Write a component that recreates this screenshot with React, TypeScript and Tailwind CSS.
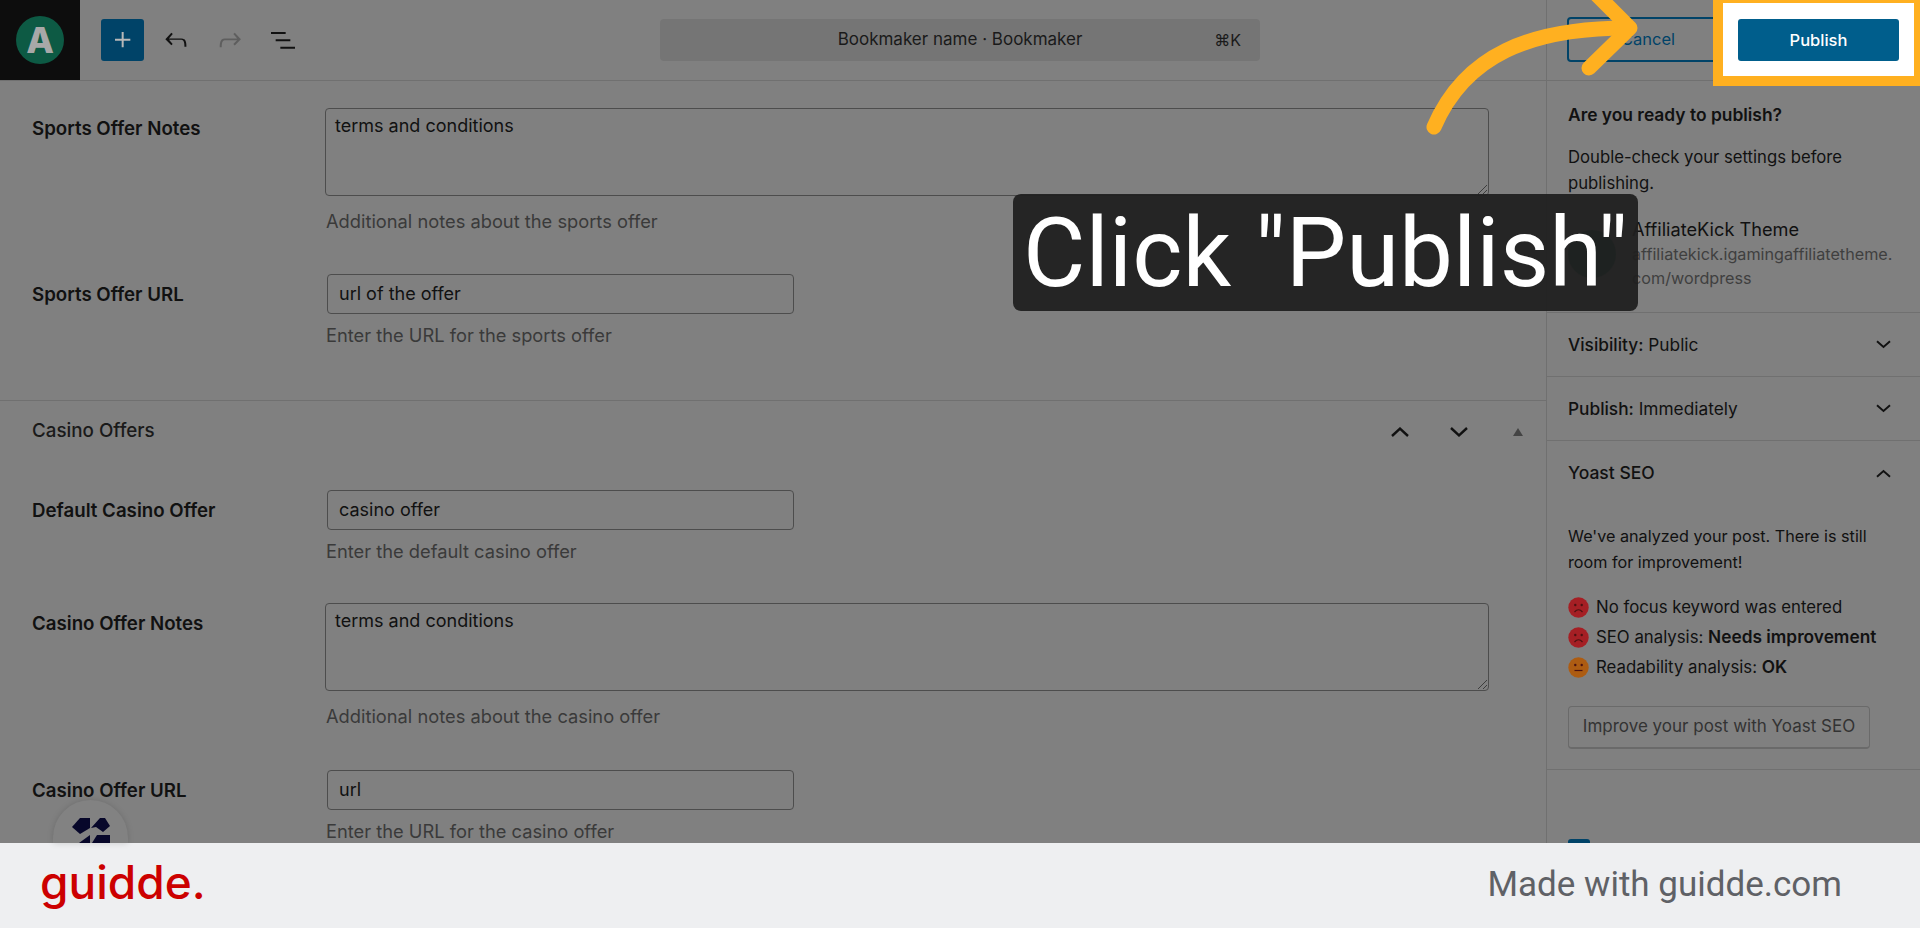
import type { ReactNode } from 'react'

const sans = 'font-["Inter",sans-serif]'

function Field({ label, children, help, className }: { label: string; children: ReactNode; help: string; className: string }) {
  return (
    <div className={`flex ${className}`}>
      <div className="w-[326px] pl-8 pt-[9px] text-[18.7px] leading-[24px] font-semibold text-[#111]">{label}</div>
      <div className="flex-1">
        {children}
        <div className="mt-[9px] text-[18.3px] leading-[24px] text-[#3a3a3a]">{help}</div>
      </div>
    </div>
  )
}

function TextBox({ value }: { value: string }) {
  return <div className="ml-px h-10 w-[467px] rounded-[4px] border border-[#4d4d4d] pl-[11px] text-[18px] leading-[38px] text-[#111]">{value}</div>
}

function TextArea({ value }: { value: string }) {
  return (
    <div className="pb-1">
      <div className="relative -ml-px h-[88px] w-[1164px] rounded-[4px] border border-[#4d4d4d] pl-[9px] pt-[5px] text-[18px] leading-[24px] text-[#111]">
        {value}
        <svg className="absolute right-0 bottom-0" width="12" height="12" viewBox="0 0 12 12" stroke="#3d3d3d" fill="none">
          <path d="M2 11 L11 2 M7 11 L11 7" />
        </svg>
      </div>
    </div>
  )
}

function Chevron({ up = false, className = '' }: { up?: boolean; className?: string }) {
  return (
    <svg className={className} width="18" height="10" viewBox="0 0 18 10" fill="none" stroke="#111" strokeWidth="2.4">
      <path d={up ? 'M1 9 L9 1.6 L17 9' : 'M1 1 L9 8.4 L17 1'} />
    </svg>
  )
}

function PanelRow({ label, value }: { label: string; value: string }) {
  return (
    <div className="flex h-16 items-center justify-between border-b border-[#707070] pl-[21px] pr-[29px] text-[17.3px] text-[#111]">
      <div>
        <span className="font-medium">{label}</span> {value}
      </div>
      <svg width="15" height="9" viewBox="0 0 15 9" fill="none" stroke="#111" strokeWidth="1.9">
        <path d="M1 1.2 L7.5 7 L14 1.2" />
      </svg>
    </div>
  )
}

function Face({ color, mood }: { color: string; mood: 'sad' | 'flat' }) {
  return (
    <svg width="21" height="21" viewBox="0 0 21 21" className="shrink-0">
      <circle cx="10.5" cy="10.5" r="10.2" fill={color} />
      <circle cx="7.3" cy="8" r="1.2" fill="#4a1212" />
      <circle cx="13.7" cy="8" r="1.2" fill="#4a1212" />
      <path d={mood === 'sad' ? 'M6.5 15 Q10.5 10.5 14.5 15' : 'M6.5 13.5 H14.5'} fill="none" stroke="#4a1212" strokeWidth="1.2" />
    </svg>
  )
}

export default function App() {
  return (
    <div className={`relative h-[928px] w-[1920px] overflow-hidden bg-[#808080] ${sans}`}>
      <div className="flex h-[843px] overflow-hidden">
        {/* Editor column */}
        <div className="w-[1546px] shrink-0">
          <header className="flex h-[81px] items-center border-b border-[#707070]">
            <div className="flex h-20 w-20 shrink-0 items-center justify-center bg-[#0d0d0d]">
              <div className="flex h-12 w-12 items-center justify-center rounded-full bg-[#0d5a44] text-[36px] leading-none font-extrabold text-[#a8a8a8]">A</div>
            </div>
            <div className="ml-[21px] flex items-center gap-[10.5px]">
              <button className="flex h-[42px] w-[43px] items-center justify-center rounded-[3px] bg-[#004368]">
                <svg width="32" height="32" viewBox="0 0 24 24" fill="#b8b8b8">
                  <path d="M11 12.5V17.5H12.5V12.5H17.5V11H12.5V6H11V11H6V12.5H11Z" />
                </svg>
              </button>
              <button className="flex h-[42px] w-[43px] items-center justify-center">
                <svg width="32" height="32" viewBox="0 0 24 24" fill="#111">
                  <path d="M18.3 11.7c-.6-.6-1.4-.9-2.3-.9H6.7l2.9-3.3-1.1-1-4.5 5L8.5 16l1-1-2.7-3.2H16c.5 0 .9.2 1.3.5 1 1 1 3.4 1 4.5v.3h1.5v-.2c0-1.5 0-4.3-1.5-5.7z" />
                </svg>
              </button>
              <button className="flex h-[42px] w-[43px] items-center justify-center">
                <svg width="32" height="32" viewBox="0 0 24 24" fill="#5e5e5e">
                  <path d="M15.6 6.5l-1.1 1 2.9 3.3H8c-.9 0-1.7.3-2.3.9-1.4 1.5-1.4 4.2-1.4 5.6v.2h1.5v-.3c0-1.1 0-3.5 1-4.5.3-.3.7-.5 1.3-.5h9.2L14.5 15l1.1 1.1 4.6-4.6-4.6-5z" />
                </svg>
              </button>
              <button className="flex h-[42px] w-[43px] items-center justify-center">
                <svg width="32" height="32" viewBox="0 0 24 24" fill="#111">
                  <path d="M3 6h11v1.5H3V6zm3.5 5.5h11V13h-11v-1.5zM21 17H10v1.5h11V17z" />
                </svg>
              </button>
            </div>
            <div className="relative ml-auto mr-[286px] flex h-[42px] w-[600px] items-center justify-center rounded-[4px] bg-[#757575] text-[17px] text-[#1a1a1a]">
              Bookmaker name · Bookmaker
              <span className="absolute right-[19px] text-[16px]">⌘K</span>
            </div>
          </header>

          <div className="pt-[27px]">
            <Field label="Sports Offer Notes" help="Additional notes about the sports offer" className="">
              <TextArea value="terms and conditions" />
            </Field>
            <Field label="Sports Offer URL" help="Enter the URL for the sports offer" className="mt-[41px]">
              <TextBox value="url of the offer" />
            </Field>

            <div className="mt-[53px] flex h-[62px] items-center border-t border-[#707070] pl-8 pr-[23px] text-[18.8px] font-medium text-[#1a1a1a]">
              <span className="flex-1">Casino Offers</span>
              <Chevron up />
              <Chevron className="ml-[41px]" />
              <svg className="ml-[45px]" width="10" height="8" viewBox="0 0 10 8" fill="#444">
                <path d="M5 0 L10 8 L0 8 Z" />
              </svg>
            </div>

            <Field label="Default Casino Offer" help="Enter the default casino offer" className="mt-[28px]">
              <TextBox value="casino offer" />
            </Field>
            <Field label="Casino Offer Notes" help="Additional notes about the casino offer" className="mt-[40px]">
              <TextArea value="terms and conditions" />
            </Field>
            <Field label="Casino Offer URL" help="Enter the URL for the casino offer" className="mt-[42px]">
              <TextBox value="url" />
            </Field>
          </div>
        </div>

        {/* Publish panel */}
        <aside className="flex-1 border-l border-[#707070]">
          <div className="flex h-[81px] items-start border-b border-[#707070] pl-5 pt-[17px]">
            <button className="h-[45px] w-[162px] rounded-[4px] border-2 border-[#004368] text-[16.5px] text-[#004368]">Cancel</button>
          </div>

          <div className="h-[232px] border-b border-[#707070] pl-[21px] pr-5 text-[16.7px] text-[#111]">
            <div className="pt-[22px] text-[17.4px] leading-[24px] font-semibold">Are you ready to publish?</div>
            <p className="mt-[17px] w-[310px] leading-[26px]">Double-check your settings before publishing.</p>
            <div className="mt-[21px] flex gap-[16px]">
              <div className="mt-[13px] h-12 w-12 shrink-0 rounded-full bg-[#0d5a44]" />
              <div>
                <div className="text-[18.2px] leading-[24px]">AffiliateKick Theme</div>
                <div className="mt-[1px] text-[16.2px] leading-[24px] text-[#3f3f3f]">
                  affiliatekick.igamingaffiliatetheme.
                  <br />
                  com/wordpress
                </div>
              </div>
            </div>
          </div>

          <PanelRow label="Visibility:" value="Public" />
          <PanelRow label="Publish:" value="Immediately" />

          <div className="h-[329px] border-b border-[#707070] pl-[21px] text-[16.8px] text-[#111]">
            <div className="flex h-[64px] items-center justify-between pr-[29px] text-[17.5px] font-medium">
              Yoast SEO
              <svg width="15" height="9" viewBox="0 0 15 9" fill="none" stroke="#111" strokeWidth="1.9">
                <path d="M1 7.8 L7.5 2 L14 7.8" />
              </svg>
            </div>
            <p className="mt-[18px] w-[330px] text-[16.2px] leading-[26px]">We've analyzed your post. There is still room for improvement!</p>
            <ul className="mt-[20px] flex flex-col gap-[6px] leading-[24px]">
              <li className="flex items-center gap-[7px]">
                <Face color="#a51f24" mood="sad" />
                No focus keyword was entered
              </li>
              <li className="flex items-center gap-[7px]">
                <Face color="#a51f24" mood="sad" />
                <span>
                  SEO analysis: <b className="text-[17.3px] font-semibold">Needs improvement</b>
                </span>
              </li>
              <li className="flex items-center gap-[7px]">
                <Face color="#ad5c12" mood="flat" />
                <span>
                  Readability analysis: <b className="text-[17.3px] font-semibold">OK</b>
                </span>
              </li>
            </ul>
            <button className="mt-[27px] h-[43px] w-[302px] rounded-[4px] border border-[#6a6a6a] border-b-2 text-[17px] text-[#333]">Improve your post with Yoast SEO</button>
          </div>

          <div className="mt-[69px] flex gap-3 pl-[21px]">
            <div className="h-[22px] w-[22px] shrink-0 rounded-[3px] bg-[#004368]" />
            <div className="text-[17px] text-[#333]">Always show pre-publish checks.</div>
          </div>
        </aside>
      </div>

      <footer className="flex h-[85px] items-center justify-between bg-[#eeeff1] pl-10 pr-[78px]">
        <span className="-mt-[8px] text-[46px] leading-none font-medium text-[#cc0000]">guidde.</span>
        <span className='font-["Roboto",sans-serif] text-[35px] text-[#5f6166]'>Made with guidde.com</span>
      </footer>

      {/* Help bubble cut off by the footer */}
      <div className="absolute left-[53px] top-[800px] flex h-[43px] w-[75px] items-start justify-center overflow-hidden rounded-t-full bg-[#828282] pt-[17px] shadow-[0_0_6px_rgba(0,0,0,0.15)]">
        <svg width="38" height="26" viewBox="0 0 38 26" fill="#07072a">
          <path d="M0 10 L8 1 L18 1 L18 11 L8 17 Z" />
          <path d="M19 11 L28 1 L33 1 L38 9 L31 15 L24 10 Z" />
          <path d="M7 26 L18 18 L18 26 Z" />
          <path d="M25 18 L38 18 L38 26 L20 26 Z" />
        </svg>
      </div>

      {/* Highlighted publish button */}
      <div className="absolute left-[1713px] top-0 h-[86px] w-[207px] overflow-hidden border-[10px] border-t-[3px] border-r-[6px] border-[#ffb020] bg-white">
        <div className="absolute left-[-10px] top-[14px] h-[45px] w-[6px] rounded-r-[4px] border-2 border-l-0 border-[#007cba]" />
        <button className="absolute left-[15px] top-[16px] h-[42px] w-[161px] rounded-[3px] bg-[#005e8c] text-[16.5px] font-medium text-white">Publish</button>
      </div>

      {/* Callout */}
      <div className='absolute left-[1013px] top-[194px] flex h-[117px] w-[625px] items-center justify-center rounded-[8px] bg-[#202020]/95 font-["Roboto",sans-serif] text-[96px] leading-none whitespace-nowrap text-white'>
        Click "Publish"
      </div>

      <svg className="absolute left-[1420px] top-0" width="230" height="140" viewBox="1420 0 230 140" fill="none" stroke="#ffb020" strokeWidth="15" strokeLinecap="round" strokeLinejoin="round">
        <path d="M1434 127 C1465 55 1530 28 1628 28" />
        <path d="M1589 68 L1630 28 L1590 -12" />
      </svg>
    </div>
  )
}
